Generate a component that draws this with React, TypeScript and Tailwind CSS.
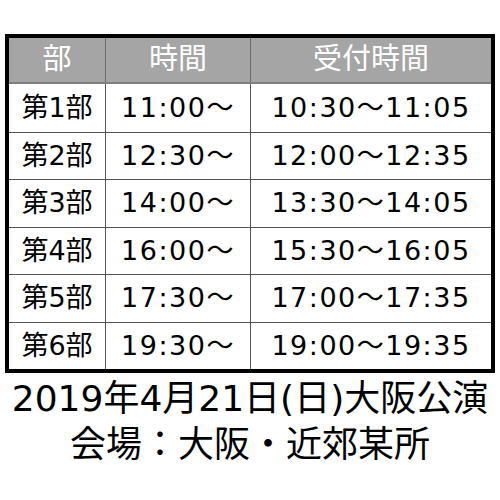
import React from 'react';

const rows = [
  { part: '第1部', start: '11:00～', reception: '10:30～11:05' },
  { part: '第2部', start: '12:30～', reception: '12:00～12:35' },
  { part: '第3部', start: '14:00～', reception: '13:30～14:05' },
  { part: '第4部', start: '16:00～', reception: '15:30～16:05' },
  { part: '第5部', start: '17:30～', reception: '17:00～17:35' },
  { part: '第6部', start: '19:30～', reception: '19:00～19:35' },
];

const font = { fontFamily: '"DejaVu Sans", "Noto Sans CJK JP", sans-serif' };

export default function App() {
  return (
    <div className="w-[500px] h-[500px] bg-white pt-[34px] px-[5px]" style={font}>
      {/* Schedule table */}
      <div className="w-[490px] border-4 border-black">
        <div className="grid grid-cols-[96px_145px_1fr] h-[46px] bg-[#a5a5a5] text-white text-[29px] border-b-2 border-[#7f7f7f]">
          <div className="flex items-center justify-center">部</div>
          <div className="flex items-center justify-center border-l border-[#6b6b6b]">時間</div>
          <div className="flex items-center justify-center border-l border-[#6b6b6b]">受付時間</div>
        </div>
        {rows.map((row, i) => (
          <div
            key={row.part}
            className={`grid grid-cols-[96px_145px_1fr] h-[47.5px] text-[27px] text-black tracking-[1.5px] ${i > 0 ? 'border-t border-[#555]' : ''}`}
          >
            <div className="flex items-center justify-center tracking-normal">{row.part}</div>
            <div className="flex items-center justify-center border-l border-[#555]">{row.start}</div>
            <div className="flex items-center justify-center border-l border-[#555]">{row.reception}</div>
          </div>
        ))}
      </div>

      {/* Event info */}
      <div className="mt-[3px] text-center text-black text-[36px] leading-[46px]">
        <p>2019年4月21日(日)大阪公演</p>
        <p>会場：大阪・近郊某所</p>
      </div>
    </div>
  );
}
